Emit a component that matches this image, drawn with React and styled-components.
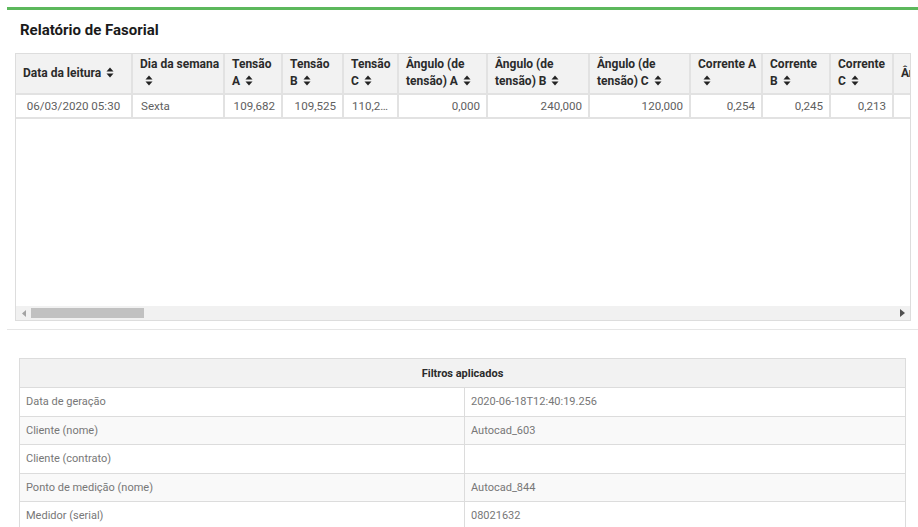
import React from "react"
import styled, { createGlobalStyle } from "styled-components"

const GlobalStyle = createGlobalStyle`
  body {
    margin: 0;
    background: #fff;
    font-family: Roboto, "Liberation Sans", sans-serif;
  }
`

const Page = styled.div`
  width: 918px;
  height: 527px;
  overflow: hidden;
  padding: 7px 0 0 7px;
  box-sizing: border-box;
`

const Panel = styled.section`
  border-top: 3px solid #5cb85c;
  border-bottom: 1px solid #e6e6e6;
  padding: 0 7px 8px 8px;
`

const Title = styled.h3`
  margin: 0;
  padding: 11px 0 0 5px;
  height: 32px;
  box-sizing: border-box;
  font-size: 15px;
  font-weight: 700;
  color: #1a1a1a;
  line-height: 18px;
`

const TableBox = styled.div`
  margin-top: 11px;
  border: 1px solid #dddddd;
  width: 896px;
  box-sizing: border-box;
`

const ScrollArea = styled.div`
  height: 252px;
  overflow: hidden;
  background: #fff;
`

const DataTable = styled.table`
  border-collapse: collapse;
  table-layout: fixed;
`

const Th = styled.th`
  width: ${p => p.$w}px;
  min-width: ${p => p.$w}px;
  max-width: ${p => p.$w}px;
  background: #f2f2f2;
  border: 2px solid #e2e2e2;
  border-top: 0;
  padding: 2px 7px 3px 7px;
  height: 40px;
  box-sizing: border-box;
  text-align: left;
  vertical-align: middle;
  font-size: 12px;
  font-weight: 700;
  color: #2b2b2b;
  line-height: 17px;
  white-space: nowrap;
  overflow: hidden;
  &:first-child {
    border-left: 0;
  }
`

const Td = styled.td`
  border: 2px solid #e2e2e2;
  padding: ${p => (p.$align === "left" ? "0 6px 0 8px" : "0 6px")};
  height: 24px;
  box-sizing: border-box;
  font-size: 11.6px;
  color: #606060;
  text-align: ${p => p.$align || "right"};
  white-space: nowrap;
  overflow: hidden;
  text-overflow: ellipsis;
  &:first-child {
    border-left: 0;
  }
`

const Scrollbar = styled.div`
  display: flex;
  align-items: center;
  height: 14px;
  background: #f1f1f1;
`

const ArrowBtn = styled.div`
  width: 15px;
  height: 14px;
  display: flex;
  align-items: center;
  justify-content: center;
`

const Track = styled.div`
  flex: 1;
  height: 10px;
  display: flex;
`

const Thumb = styled.div`
  width: 113px;
  height: 10px;
  background: #c1c1c1;
`

const Filters = styled.table`
  margin: 28px 0 0 12px;
  width: 887px;
  border-collapse: collapse;
  table-layout: fixed;
  font-size: 11px;
  color: #777;
`

const FilterHead = styled.th`
  background: #f2f2f2;
  border: 1px solid #dcdcdc;
  height: 29px;
  padding: 0;
  box-sizing: border-box;
  font-size: 11px;
  font-weight: 700;
  color: #2b2b2b;
  text-align: center;
`

const FilterRow = styled.tr`
  background: ${p => (p.$striped ? "#f9f9f9" : "#fff")};
`

const FilterCell = styled.td`
  border: 1px solid #dcdcdc;
  height: 28.5px;
  padding: 0 6px;
  box-sizing: border-box;
  white-space: nowrap;
`

const SortIcon = () => (
  <svg width="8" height="11" viewBox="0 0 8 11" style={{ marginLeft: 5, verticalAlign: "-1px" }}>
    <path d="M4 0.5 L7.5 4.5 H0.5 Z M4 10.5 L7.5 6.5 H0.5 Z" fill="#222" />
  </svg>
)

const columns = [
  { w: 116, lines: ["Data da leitura"], value: "06/03/2020 05:30", align: "center" },
  { w: 92, lines: ["Dia da semana", ""], value: "Sexta", align: "left" },
  { w: 58, lines: ["Tensão", "A"], value: "109,682" },
  { w: 61, lines: ["Tensão", "B"], value: "109,525" },
  { w: 55, lines: ["Tensão", "C"], value: "110,263", align: "left" },
  { w: 89, lines: ["Ângulo (de", "tensão) A"], value: "0,000" },
  { w: 102, lines: ["Ângulo (de", "tensão) B"], value: "240,000" },
  { w: 101, lines: ["Ângulo (de", "tensão) C"], value: "120,000" },
  { w: 72, lines: ["Corrente A", ""], value: "0,254" },
  { w: 68, lines: ["Corrente", "B"], value: "0,245" },
  { w: 63, lines: ["Corrente", "C"], value: "0,213" },
  { w: 160, lines: ["Ângulo (de corrente) A"], value: "0,000" },
]

const tableWidth = columns.reduce((sum, c) => sum + c.w, 0)

const filters = [
  ["Data de geração", "2020-06-18T12:40:19.256"],
  ["Cliente (nome)", "Autocad_603"],
  ["Cliente (contrato)", ""],
  ["Ponto de medição (nome)", "Autocad_844"],
  ["Medidor (serial)", "08021632"],
]

const HeaderLabel = ({ lines }) => (
  <>
    {lines.map((line, i) => (
      <React.Fragment key={i}>
        {i > 0 && <br />}
        {line}
        {i === lines.length - 1 && <SortIcon />}
      </React.Fragment>
    ))}
  </>
)

const App = () => {
  return (
    <Page>
      <GlobalStyle />
      <Panel>
        <Title>Relatório de Fasorial</Title>
        <TableBox>
          <ScrollArea>
            <DataTable style={{ width: tableWidth }}>
              <thead>
                <tr>
                  {columns.map((c, i) => (
                    <Th key={i} $w={c.w}>
                      <HeaderLabel lines={c.lines} />
                    </Th>
                  ))}
                </tr>
              </thead>
              <tbody>
                <tr>
                  {columns.map((c, i) => (
                    <Td key={i} $align={c.align}>
                      {c.value}
                    </Td>
                  ))}
                </tr>
              </tbody>
            </DataTable>
          </ScrollArea>
          <Scrollbar>
            <ArrowBtn>
              <svg width="4" height="7" viewBox="0 0 4 7">
                <path d="M4 0 L0 3.5 L4 7 Z" fill="#a3a3a3" />
              </svg>
            </ArrowBtn>
            <Track>
              <Thumb />
            </Track>
            <ArrowBtn>
              <svg width="5" height="8" viewBox="0 0 5 8">
                <path d="M0 0 L5 4 L0 8 Z" fill="#505050" />
              </svg>
            </ArrowBtn>
          </Scrollbar>
        </TableBox>
      </Panel>
      <Filters>
        <colgroup>
          <col style={{ width: 445 }} />
          <col />
        </colgroup>
        <thead>
          <tr>
            <FilterHead colSpan={2}>Filtros aplicados</FilterHead>
          </tr>
        </thead>
        <tbody>
          {filters.map(([label, value], i) => (
            <FilterRow key={label} $striped={i % 2 === 1}>
              <FilterCell>{label}</FilterCell>
              <FilterCell>{value}</FilterCell>
            </FilterRow>
          ))}
        </tbody>
      </Filters>
    </Page>
  )
}

export default App
